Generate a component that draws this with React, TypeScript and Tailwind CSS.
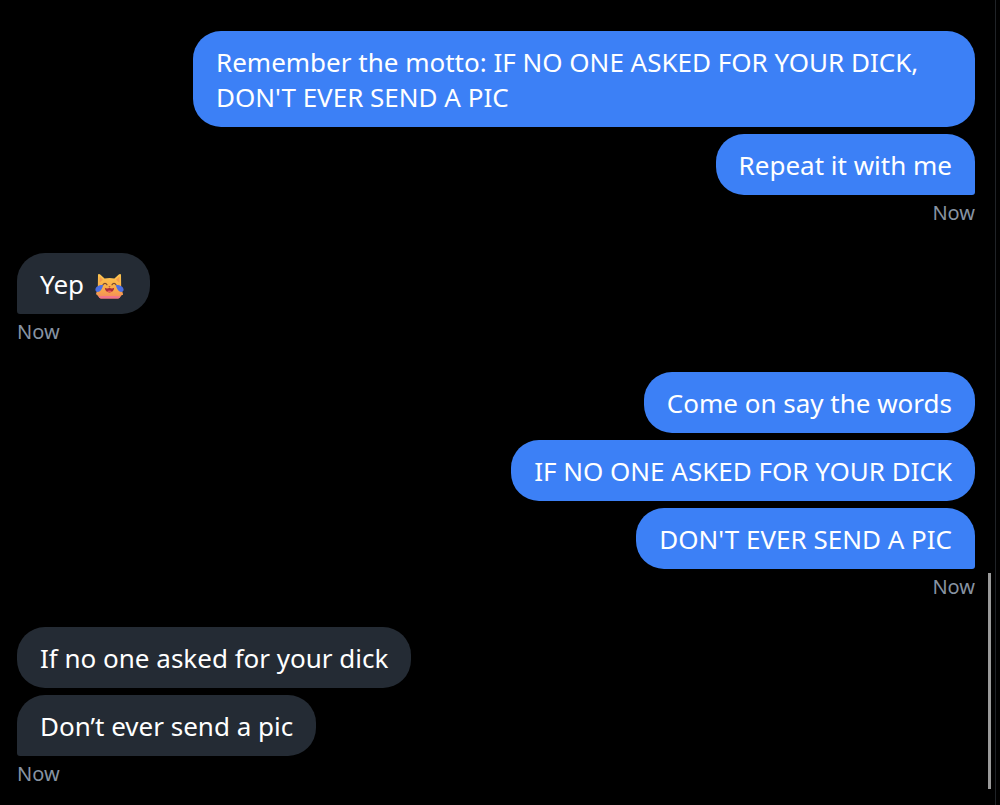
import React from "react";
import clsx from "clsx";

interface Group {
  sent: boolean;
  time: string;
  messages: React.ReactNode[];
}

const JoyCat = () => (
  <svg
    role="img"
    aria-label="cat with tears of joy"
    className="inline-block w-8 h-8 ml-1 -my-2 align-middle"
    viewBox="0 0 32 32"
  >
    <defs>
      <linearGradient id="fur" x1="0" y1="0" x2="0" y2="1">
        <stop offset="0" stopColor="#fcc650" />
        <stop offset="0.6" stopColor="#f9ab48" />
        <stop offset="1" stopColor="#f28a5c" />
      </linearGradient>
    </defs>
    <path
      d="M3 4.2C3 2.8 4.2 2.5 5.2 3.4L9.6 7.4C12.6 6.7 16.4 6.7 19.4 7.4L23.8 3.4C24.8 2.5 26 2.8 26 4.2L26.2 17L28 23C28.2 23.8 27.6 24.2 26.6 24.2L24.8 26.6C24.2 27.4 23.4 27.6 22.4 27.6H6.6C5.6 27.6 4.8 27.4 4.2 26.6L2.4 24.2C1.4 24.2 0.8 23.8 1 23L2.8 17Z"
      fill="url(#fur)"
    />
    <path d="M4.6 5.4L8 8.8L4.6 11.4ZM24.4 5.4L21 8.8L24.4 11.4Z" fill="#f39a4c" />
    <path d="M3.4 25.4C9 25 20 25 25.6 25.4L24.8 26.6C24.2 27.4 23.4 27.6 22.4 27.6H6.6C5.6 27.6 4.8 27.4 4.2 26.6Z" fill="#f0738c" />
    <path
      d="M8 13.8C9 12 11 12 12 13.8M17 13.8C18 12 20 12 21 13.8"
      fill="none"
      stroke="#7a4a32"
      strokeWidth="1.2"
      strokeLinecap="round"
    />
    <path d="M13.4 15.2H15.6L14.5 16.6Z" fill="#b4433f" />
    <path d="M9.8 16.8C11.4 17.8 13.2 17.6 14.5 16.8C15.8 17.6 17.6 17.8 19.2 16.8C19 19.8 17 21.4 14.5 21.4C12 21.4 10 19.8 9.8 16.8Z" fill="#a82c3a" />
    <path d="M12 20.3C13.2 19.3 15.8 19.3 17 20.3C15.8 21.6 13.2 21.6 12 20.3Z" fill="#ee5a5f" />
    <path d="M8.2 14.2C5 13.6 0.8 15.6 0.4 18.4C0.2 20.8 2.8 21.6 4.8 20.2C6.8 18.8 7.4 16.6 8.2 14.2Z" fill="#4c6fe2" />
    <path d="M20.8 14.2C24 13.6 28.2 15.6 28.6 18.4C28.8 20.8 26.2 21.6 24.2 20.2C22.2 18.8 21.6 16.6 20.8 14.2Z" fill="#4c6fe2" />
  </svg>
);

const groups: Group[] = [
  {
    sent: true,
    time: "Now",
    messages: [
      "Remember the motto: IF NO ONE ASKED FOR YOUR DICK, DON'T EVER SEND A PIC",
      "Repeat it with me",
    ],
  },
  { sent: false, time: "Now", messages: [<>Yep <JoyCat /></>] },
  {
    sent: true,
    time: "Now",
    messages: [
      "Come on say the words",
      "IF NO ONE ASKED FOR YOUR DICK",
      "DON'T EVER SEND A PIC",
    ],
  },
  {
    sent: false,
    time: "Now",
    messages: ["If no one asked for your dick", "Don’t ever send a pic"],
  },
];

const App = () => {
  return (
    <div className="min-h-screen bg-black pr-1 flex font-['Noto_Sans',sans-serif]">
      <main className="relative grow flex flex-col gap-[26px] border-r border-[#202327] pt-[31px] pb-4 pl-[17px] pr-5">
        {groups.map((group, index) => (
          <section
            key={index}
            className={clsx(
              "flex flex-col gap-[7px]",
              group.sent ? "items-end pl-44" : "items-start pr-44"
            )}
          >
            {group.messages.map((message, i) => {
              const last = i === group.messages.length - 1;
              return (
                <div
                  key={i}
                  className={clsx(
                    "px-[23px] pt-[14px] pb-3 text-[26px] leading-[35px] text-white rounded-[28px]",
                    group.sent ? "bg-[#3c80f6]" : "bg-[#242b34]",
                    last && (group.sent ? "rounded-br-[3px]" : "rounded-bl-[3px]")
                  )}
                >
                  {message}
                </div>
              );
            })}
            <time className="-mt-[3px] text-[20px] leading-7 text-[#8793a2]">
              {group.time}
            </time>
          </section>
        ))}
        <div className="absolute right-1 bottom-4 w-[3px] h-[216px] bg-[#9a9a9a]" />
      </main>
    </div>
  );
};

export default App;
